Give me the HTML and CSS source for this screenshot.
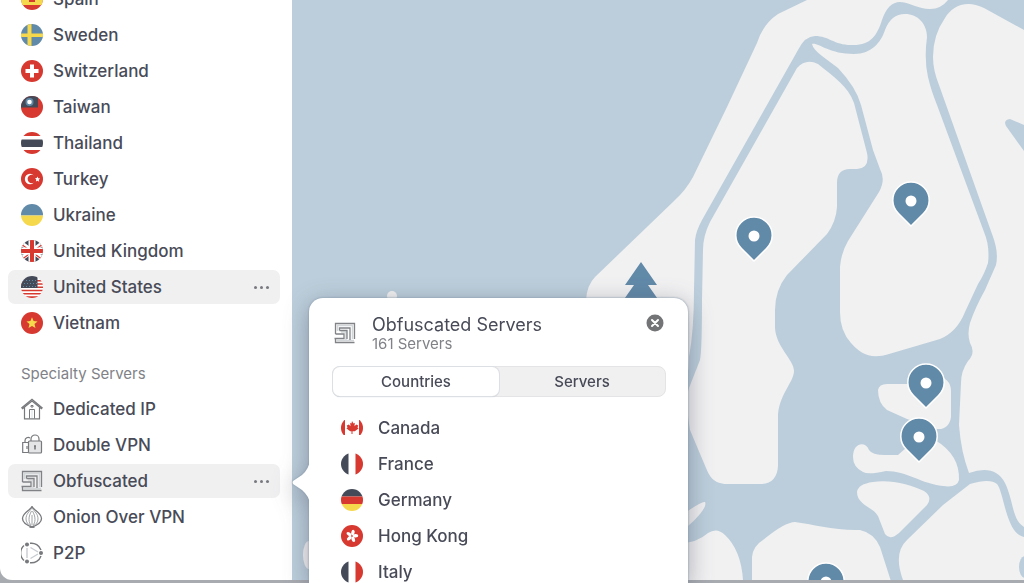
FILE: index.html
```
<!DOCTYPE html>
<html lang="en">
<head>
    <meta charset="UTF-8">
    <meta name="viewport" content="width=device-width, initial-scale=1.0">
    <title>VPN Servers</title>
    <link rel="stylesheet" href="styles.css">
</head>
<body>
    <!-- Shared shapes -->
    <svg class="defs" aria-hidden="true">
        <clipPath id="round"><circle cx="11" cy="11" r="11"/></clipPath>
        <symbol id="maze" viewBox="0 0 22 22">
            <path d="M3.500 9V3.500h15V17M7 10h5v8.500H2.500M12 18.500h8" fill="none" stroke="#d3d6d9" stroke-width="1.500"/>
            <g fill="none" stroke="#808286" stroke-width="1.300">
                <path d="M1.500 12V1.500h19V17M1.500 12H10v4.500H.5"/>
                <path d="M5.500 8.500V6H16v12M5.500 8.500H13V17M1.500 17v3.500h19"/>
            </g>
        </symbol>
        <symbol id="tricolor" viewBox="0 0 22 22">
            <g clip-path="url(#round)">
                <path fill="#fff" d="M0 0h22v22H0z"/>
                <path fill="#454a59" d="M0 0h7.500v22H0z"/>
                <path fill="#d7382f" d="M14.500 0H22v22h-7.500z"/>
            </g>
        </symbol>
        <symbol id="pin" viewBox="0 0 40 48">
            <path fill="#6189a8" stroke="#fff" stroke-width="1.500" d="M20 45L7.500 32.500A18.200 18.200 0 1 1 32.500 32.500z"/>
            <circle cx="20" cy="20" r="5.500" fill="#fff"/>
        </symbol>
    </svg>

    <div class="app">
        <nav class="sidebar">
            <ul class="server-list">
                <li><a href="#">
                    <svg class="flag" viewBox="0 0 22 22"><g clip-path="url(#round)"><path fill="#d7382f" d="M0 0h22v22H0z"/><path fill="#f6d84c" d="M0 5h22v12H0z"/><path fill="#d7382f" d="M8 8h6v6H8z"/></g></svg>
                    <span>Spain</span>
                </a></li>
                <li><a href="#">
                    <svg class="flag" viewBox="0 0 22 22"><g clip-path="url(#round)"><path fill="#6189a8" d="M0 0h22v22H0z"/><path fill="#f6d84c" d="M6.500 0h4v22h-4zM0 9.500h22v3.500H0z"/></g></svg>
                    <span>Sweden</span>
                </a></li>
                <li><a href="#">
                    <svg class="flag" viewBox="0 0 22 22"><circle cx="11" cy="11" r="11" fill="#d7382f"/><path fill="#fff" d="M9 4.500h4V9h4.500v4H13v4.500H9V13H4.500V9H9z"/></svg>
                    <span>Switzerland</span>
                </a></li>
                <li><a href="#">
                    <svg class="flag" viewBox="0 0 22 22"><g clip-path="url(#round)"><path fill="#d7382f" d="M0 0h22v22H0z"/><path fill="#454a59" d="M0 0h17v11.500H0z"/><circle cx="8.500" cy="6" r="4" fill="#6189a8"/><circle cx="8.500" cy="6" r="2.300" fill="#fff"/></g></svg>
                    <span>Taiwan</span>
                </a></li>
                <li><a href="#">
                    <svg class="flag" viewBox="0 0 22 22"><g clip-path="url(#round)"><path fill="#fff" d="M0 0h22v22H0z"/><path fill="#d7382f" d="M0 0h22v4H0zM0 18h22v4H0z"/><path fill="#454a59" d="M0 7.500h22v7.500H0z"/></g></svg>
                    <span>Thailand</span>
                </a></li>
                <li><a href="#">
                    <svg class="flag" viewBox="0 0 22 22"><circle cx="11" cy="11" r="11" fill="#d7382f"/><circle cx="9" cy="11" r="5.200" fill="#fff"/><circle cx="10.800" cy="11" r="4.200" fill="#d7382f"/><path fill="#fff" d="M16.500 8.500l.8 1.700 1.900.3-1.400 1.200.4 2-1.700-1-1.600.7.300-1.900-1.200-1.300 1.700-.2z"/></svg>
                    <span>Turkey</span>
                </a></li>
                <li><a href="#">
                    <svg class="flag" viewBox="0 0 22 22"><g clip-path="url(#round)"><path fill="#6189a8" d="M0 0h22v11.500H0z"/><path fill="#f6d84c" d="M0 11.500h22V22H0z"/></g></svg>
                    <span>Ukraine</span>
                </a></li>
                <li><a href="#">
                    <svg class="flag" viewBox="0 0 22 22"><g clip-path="url(#round)"><path fill="#454a59" d="M0 0h22v22H0z"/><path stroke="#fff" stroke-width="4.500" d="M0 3l22 16M22 3L0 19"/><path stroke="#d7382f" stroke-width="1.200" d="M0 4l22 16M22 4L0 20"/><path fill="#fff" d="M7.500 0h7v22h-7zM0 7.500h22v7H0z"/><path fill="#d7382f" d="M9 0h4v22H9zM0 9h22v4H0z"/></g></svg>
                    <span>United Kingdom</span>
                </a></li>
                <li class="active"><a href="#">
                    <svg class="flag" viewBox="0 0 22 22"><g clip-path="url(#round)"><path fill="#fff" d="M0 0h22v22H0z"/><path fill="#d7382f" d="M0 4h22v1.500H0zM0 7.200h22v1.500H0zM0 10.500h22V12H0zM0 13.800h22v1.500H0zM0 17h22v1.500H0zM0 20.200h22v1.800H0z"/><path fill="#454a59" d="M0 0h16.500v12H0z"/><path stroke="#6189a8" stroke-width="1" stroke-dasharray="1 2" d="M2 4.500h14M3 7.500h13M2 10.500h14"/></g></svg>
                    <span>United States</span>
                </a><button class="more" aria-label="More options for United States"></button></li>
                <li><a href="#">
                    <svg class="flag" viewBox="0 0 22 22"><circle cx="11" cy="11" r="11" fill="#d7382f"/><path fill="#f6d84c" d="M11 5.300l1.600 3.800 4 .3-3.100 2.700 1 4L11 14l-3.500 2.100 1-4-3.100-2.700 4-.3z"/></svg>
                    <span>Vietnam</span>
                </a></li>
            </ul>

            <h2 class="section-title">Specialty Servers</h2>

            <ul class="server-list">
                <li><a href="#">
                    <svg class="flag" viewBox="0 0 22 22" fill="none" stroke="#77797c" stroke-width="1.200"><path d="M.8 9.800L11 1.200l10.200 8.600-.8.9L11 3 1.600 10.700zM3.500 9.500v11.300h15V9.500"/><path d="M8.500 20.500v-9h5v9M10 7.500h2V9h-2z" stroke-width="1"/><path stroke="#b9cbd8" stroke-dasharray="1 1" d="M11 12.500v8"/></svg>
                    <span>Dedicated IP</span>
                </a></li>
                <li><a href="#">
                    <svg class="flag" viewBox="0 0 22 22" fill="none" stroke="#77797c" stroke-width="1.200"><path d="M7 18.500H1.700V8.500H7M4 8.500V6.500a3.200 3.200 0 0 1 5-2.600M6 12v3"/><rect x="7.500" y="7" width="13" height="12" rx="1" fill="#e4e5e6"/><path d="M10 7V5a4 4 0 0 1 8 0v2"/><path d="M14 11.500v4M13 12h2" stroke-width="1.600"/></svg>
                    <span>Double VPN</span>
                </a></li>
                <li class="active"><a href="#">
                    <svg class="flag"><use href="#maze"/></svg>
                    <span>Obfuscated</span>
                </a><button class="more" aria-label="More options for Obfuscated"></button></li>
                <li><a href="#">
                    <svg class="flag" viewBox="0 0 22 22" fill="none" stroke="#77797c"><path stroke-width="1.300" d="M11 .5c1 3.500 9.500 6 9.500 12 0 4-4 6.500-9.500 8.500-5.500-2-9.500-4.500-9.500-8.500C1.500 6.500 10 4 11 .5z"/><path stroke="#a0a2a5" d="M11 2C8 6 5 8 5 13c0 3 2 5.500 5 7M11 2c3 4 6 6 6 11 0 3-2 5.500-5 7M10.500 5C9 8 8 10 8 13.500c0 2.500 1 4.500 2 6M11.500 5c1.500 3 2.500 5 2.500 8.500 0 2.500-1 4.500-2 6M11 9v10"/><path stroke-width="1.800" d="M8.500 21h5"/></svg>
                    <span>Onion Over VPN</span>
                </a></li>
                <li><a href="#">
                    <svg class="flag" viewBox="0 0 22 22" fill="none" stroke="#77797c" stroke-width="1.400"><path d="M9 1.300A10 10 0 0 1 20 8M20 14a10 10 0 0 1-11 6.700M3 18.500a10 10 0 0 1 0-15"/><path stroke="#c8ccd0" d="M6 6v10M9.500 5.500L17 10M9.500 16.500L17 12"/><g fill="#77797c" stroke="none"><circle cx="6" cy="2.500" r="2"/><circle cx="20" cy="11" r="2"/><circle cx="6" cy="19.500" r="2"/></g></svg>
                    <span>P2P</span>
                </a></li>
            </ul>
        </nav>

        <main class="map">
            <svg viewBox="292 0 732 580" preserveAspectRatio="xMinYMin slice" role="img" aria-label="Server map">
                <g fill="#f1f1f2">
                    <path d="M807 0L778 14Q763 24 757 43L727 107L693 177Q686 190 674 201L595 277Q587 285 586 300V400H680Q689 380 689 357Q694 330 694 290L695 240Q696 231 702 220L798 50Q805 36 815 36C829 36 834 45 851 45C870 46 877 36 882 20Q888 2 900 2C912 3 918 9 930 9Q941 9 948 0z"/>
                    <path d="M797 68Q806 58 818 64C835 78 848 86 854 103L867 153Q870 168 857 169H850Q837 169 837 183V207Q836 222 827 234L787 275Q775 290 775 310V328C776 347 794 360 794 371C794 382 778 396 778 417V466Q777 484 760 484H727C713 484 709 475 706 468L690 430Q685 400 689 388L700 360Q702 350 702 300L703 250Q703 236 710 222z"/>
                    <path d="M812 44C818 42 828 54 854 54C872 54 881 42 885 30Q891 14 905 14C918 14 927 24 927 37Q924 60 928 77Q931 90 937 105L984 232Q990 246 988 263Q984 275 978 284L965 312Q957 332 940 339L889 354C870 360 860 353 851 343Q840 331 840 312V267Q841 253 848 241L879 192Q886 180 880 169L873 150L861 105Q856 87 838 68L822 56Q813 49 812 44z"/>
                    <path d="M1024 30L984 8C965-1 952 7 945 18Q933 35 933 57Q933 70 939 85L992 234Q999 252 996 265L985 290Q975 308 970 323Q967 334 970 343Q976 353 968 361Q961 371 961 383L959 425Q961 452 969 473Q995 464 1005 483C1014 502 1012 520 1024 527z"/>
                    <path d="M903 580Q893 553 907 540L943 505L970 484Q990 478 997 484C1004 492 1006 534 1024 537V600H903z"/>
                    <path d="M752 600V557Q753 546 763 540Q785 522 795 522C812 524 836 531 860 530Q874 533 880 547L897 600z"/>
                    <path d="M680 543Q697 543 708 533Q717 527 725 535Q741 550 743 580V600H680z"/>
                    <path d="M685 513Q702 501 705 502C708 507 694 522 685 528z"/>
                    <path d="M878 390Q879 384 887 384H910L935 375Q951 378 951 391V417Q949 430 937 429L907 419L887 410Q878 403 878 390z"/>
                    <path d="M853 457C853 442 866 441 869 450Q872 455 885 455H898L915 440H935Q960 455 959 480Q957 488 943 486C922 484 907 471 886 471Q868 475 863 472Q853 467 853 457z"/>
                    <path d="M857 492Q858 484 873 482C890 479 912 485 924 491Q933 497 927 505L899 533Q890 541 885 534L878 516C873 507 857 505 857 492z"/>
                    <circle cx="392" cy="296" r="5"/>
                    <ellipse cx="309" cy="555" rx="6" ry="14"/>
                </g>
                <path fill="#bccedb" d="M1024 125L1010 119Q1003 120 1006 126L1024 151z"/>
                <ellipse cx="1025" cy="567" rx="6" ry="11" fill="#bccedb"/>
                <path fill="#6189a8" d="M641 262L657 285H648L662 305H620L634 285H625z"/>

                <use href="#pin" x="734" y="216" width="40" height="48"/>
                <use href="#pin" x="891" y="181" width="40" height="48"/>
                <use href="#pin" x="906" y="363" width="40" height="48"/>
                <use href="#pin" x="899" y="417" width="40" height="48"/>
                <use href="#pin" x="806" y="562" width="40" height="48"/>
            </svg>
        </main>
    </div>

    <section class="popover">
        <svg class="arrow" viewBox="0 0 18 44"><path fill="#fff" d="M18 0Q17 9 10 15L1 21Q0 22 1 24L10 30Q17 36 18 44z"/></svg>
        <header class="popover-header">
            <svg class="flag"><use href="#maze"/></svg>
            <div class="heading">
                <h1>Obfuscated Servers</h1>
                <p>161 Servers</p>
            </div>
            <button class="close" aria-label="Close">
                <svg viewBox="0 0 18 18"><circle cx="9" cy="9" r="8.500" fill="#737476"/><path stroke="#fff" stroke-width="2" stroke-linecap="round" d="M6 6l6 6M12 6l-6 6"/></svg>
            </button>
        </header>
        <div class="tabs">
            <button class="selected">Countries</button>
            <button>Servers</button>
        </div>
        <ul class="server-list">
            <li><a href="#">
                <svg class="flag" viewBox="0 0 22 22"><g clip-path="url(#round)"><path fill="#d7382f" d="M0 3h4v15H0zM18 3h4v15h-4z"/></g><path fill="#d7382f" d="M11 4l1.500 2.500 1.300-.7-.3 3.500 1.700-1.700 2 .8-.7 2.200 1 .8-3.700 2.800H11.500V17h-1v-2.800H9.200L5.500 11.400l1-.8-.7-2.200 2-.8 1.700 1.700-.3-3.500 1.300.7z"/></svg>
                <span>Canada</span>
            </a></li>
            <li><a href="#">
                <svg class="flag"><use href="#tricolor"/></svg>
                <span>France</span>
            </a></li>
            <li><a href="#">
                <svg class="flag" viewBox="0 0 22 22"><g clip-path="url(#round)"><path fill="#454a59" d="M0 0h22v7.500H0z"/><path fill="#d7382f" d="M0 7.500h22V15H0z"/><path fill="#f6d84c" d="M0 15h22v7H0z"/></g></svg>
                <span>Germany</span>
            </a></li>
            <li><a href="#">
                <svg class="flag" viewBox="0 0 22 22"><circle cx="11" cy="11" r="11" fill="#d7382f"/><g fill="#fff"><ellipse cx="11" cy="7.500" rx="1.700" ry="2.800" transform="rotate(15 11 11)"/><ellipse cx="11" cy="7.500" rx="1.700" ry="2.800" transform="rotate(87 11 11)"/><ellipse cx="11" cy="7.500" rx="1.700" ry="2.800" transform="rotate(159 11 11)"/><ellipse cx="11" cy="7.500" rx="1.700" ry="2.800" transform="rotate(231 11 11)"/><ellipse cx="11" cy="7.500" rx="1.700" ry="2.800" transform="rotate(303 11 11)"/></g></svg>
                <span>Hong Kong</span>
            </a></li>
            <li><a href="#">
                <svg class="flag"><use href="#tricolor"/></svg>
                <span>Italy</span>
            </a></li>
        </ul>
    </section>
</body>
</html>
```
FILE: styles.css
```
* {
    box-sizing: border-box;
}
body {
    margin: 0;
    height: 100vh;
    overflow: hidden;
    background-color: #a8abb0;
    color: #484b57;
    font-family: Inter, "Liberation Sans", sans-serif;
    font-size: 17px;
    font-weight: 500;
}
h1, h2, p, ul {
    margin: 0;
    padding: 0;
}
button {
    border: none;
    padding: 0;
    background: none;
    color: inherit;
    font: inherit;
    cursor: pointer;
}
.defs {
    position: absolute;
    width: 0;
    height: 0;
}
.app {
    display: flex;
    height: calc(100vh - 3px);
    border-bottom-left-radius: 12px;
    overflow: hidden;
}

/* Sidebar */
.sidebar {
    display: flex;
    flex-direction: column;
    justify-content: flex-end;
    flex: none;
    width: 292px;
    padding: 0 12px 10px 8px;
    background-color: #fff;
}
.server-list {
    display: flex;
    flex-direction: column;
    gap: 2px;
    list-style: none;
}
.server-list li {
    display: flex;
    align-items: center;
    height: 34px;
    border-radius: 7px;
}
.server-list li.active {
    background-color: #f0f0f1;
}
.server-list a {
    display: flex;
    flex: 1;
    align-items: center;
    gap: 10px;
    padding-left: 13px;
    color: inherit;
    line-height: 24px;
    text-decoration: none;
}
.flag {
    flex: none;
    width: 22px;
    height: 22px;
}
.more {
    width: 3px;
    height: 3px;
    margin: 0 17px;
    border-radius: 50%;
    background-color: #77797f;
    box-shadow: -6px 0 #77797f, 6px 0 #77797f;
}
.section-title {
    padding: 24px 13px 8px;
    color: #808287;
    font-size: 15px;
    font-weight: 400;
    line-height: 20px;
}

/* Map */
.map {
    flex: 1;
    min-width: 0;
    background-color: #bccedb;
}
.map svg {
    display: block;
    width: 100%;
    height: 100%;
}

/* Popover */
.popover {
    position: absolute;
    top: 298px;
    bottom: 0;
    left: 309px;
    width: 379px;
    padding: 16px 22px 0 23px;
    border-radius: 14px 14px 0 0;
    background-color: #fff;
    filter: drop-shadow(0 0 1px #8496a8) drop-shadow(0 6px 12px rgba(60, 60, 80, 0.4));
}
.arrow {
    position: absolute;
    top: 162px;
    left: -17px;
    width: 18px;
    height: 44px;
}
.popover-header {
    display: flex;
    align-items: center;
    gap: 16px;
    padding: 0 2px;
}
.heading {
    flex: 1;
}
.heading h1 {
    font-size: 18px;
    font-weight: 400;
    line-height: 22px;
}
.heading p {
    color: #808287;
    font-size: 15px;
    font-weight: 400;
    line-height: 15px;
}
.close {
    align-self: flex-start;
    width: 18px;
    height: 18px;
}
.close svg {
    display: block;
}
.tabs {
    display: flex;
    height: 31px;
    margin: 15px 0 14px;
    border: 1px solid #e4e4e6;
    border-radius: 8px;
    background-color: #f0f0f1;
    font-size: 15px;
}
.tabs button {
    flex: 1;
    border-radius: 7px;
}
.tabs .selected {
    background-color: #fff;
    box-shadow: 0 0 0 1px #dcdfe3, 0 1px 1px #b5c0cc;
}
.popover .server-list a {
    gap: 15px;
    padding-left: 9px;
}
```
